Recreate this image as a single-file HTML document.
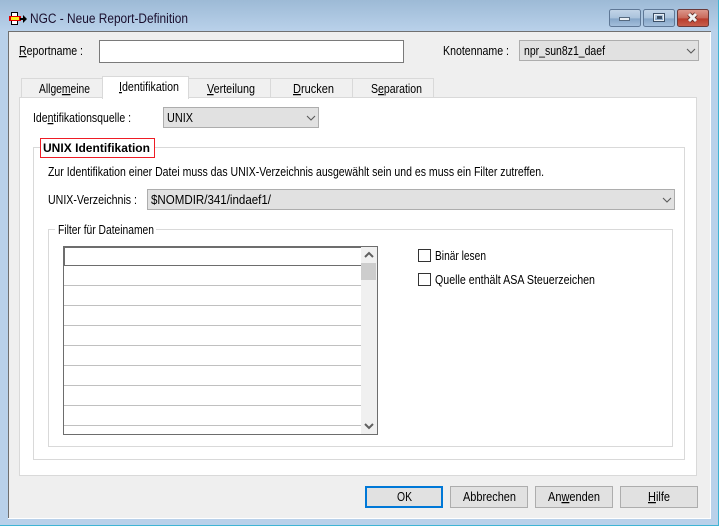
<!DOCTYPE html>
<html><head><meta charset="utf-8"><style>
html,body{margin:0;padding:0;background:#b9d1ea;width:719px;height:526px;overflow:hidden}
svg{display:block}
text{font-family:"Liberation Sans",sans-serif;font-size:12.5px;fill:#000;white-space:pre}
.r{shape-rendering:crispEdges}
</style></head><body>
<svg width="719" height="526" viewBox="0 0 719 526" xmlns="http://www.w3.org/2000/svg">
<defs>
<linearGradient id="tb" x1="0" y1="0" x2="0" y2="1"><stop offset="0" stop-color="#9dbad6"/><stop offset="1" stop-color="#b9d1ea"/></linearGradient>
<linearGradient id="b1" x1="0" y1="0" x2="0" y2="1"><stop offset="0" stop-color="#c3d5e8"/><stop offset=".5" stop-color="#a9c2dc"/><stop offset=".55" stop-color="#86a6c8"/><stop offset="1" stop-color="#a5c0dc"/></linearGradient>
<linearGradient id="b2" x1="0" y1="0" x2="0" y2="1"><stop offset="0" stop-color="#dc9a8e"/><stop offset=".5" stop-color="#c9685a"/><stop offset=".55" stop-color="#b93c2c"/><stop offset="1" stop-color="#c8604e"/></linearGradient>
</defs>
<rect width="719" height="526" fill="#b9d1ea"/>
<rect width="719" height="31" fill="url(#tb)"/>
<rect class="r" y="525" width="719" height="1" fill="#3fb4d4"/>
<rect class="r" x="718" width="1" height="526" fill="#3fb4d4"/>
<rect class="r" x="8" y="31" width="703" height="488" fill="#efefef"/>
<rect class="r" x="8" y="31" width="703" height="1" fill="#707070"/>
<rect class="r" x="8" y="31" width="1" height="487" fill="#707070"/>
<rect class="r" x="8" y="518" width="703" height="1" fill="#fff"/>
<rect class="r" x="710" y="32" width="1" height="487" fill="#fff"/>

<!-- icon -->
<g class="r"><rect x="11" y="12" width="7" height="13" fill="#000"/><rect x="12" y="13" width="5" height="11" fill="#fff"/>
<rect x="9" y="16" width="12" height="5" fill="#e00000"/><rect x="11" y="17" width="8" height="3" fill="#f7ef20"/>
<rect x="20" y="18" width="4" height="2" fill="#000"/></g>
<path d="M23 15 L27 19 L23 23 Z" fill="#000"/>
<text x="30" y="23" textLength="158" lengthAdjust="spacingAndGlyphs" style="font-size:13.5px;fill:#1a0f2e">NGC - Neue Report-Definition</text>

<!-- window buttons -->
<rect x="609.5" y="9.5" width="31" height="17" rx="2" fill="url(#b1)" stroke="#5f7896"/>
<rect x="643.5" y="9.5" width="31" height="17" rx="2" fill="url(#b1)" stroke="#5f7896"/>
<rect x="677.5" y="9.5" width="31" height="17" rx="2" fill="url(#b2)" stroke="#6a3a3a"/>
<rect x="619.5" y="17.5" width="10" height="3" fill="#e8eef4" stroke="#55697f"/>
<rect x="653.5" y="13.5" width="11" height="8" fill="none" stroke="#3c4f66"/><rect x="654.5" y="14.5" width="9" height="6" fill="none" stroke="#e8eef4"/><rect class="r" x="657" y="16" width="5" height="3" fill="#3c4f66"/>
<path d="M689 14 L696 21 M696 14 L689 21" stroke="#5c2a24" stroke-width="4.6"/>
<path d="M689 14 L696 21 M696 14 L689 21" stroke="#f2f2f2" stroke-width="3"/>

<!-- top row -->
<text x="19" y="55" textLength="64" lengthAdjust="spacingAndGlyphs"><tspan text-decoration="underline">R</tspan>eportname :</text>
<rect class="r" x="99.5" y="40.5" width="304" height="22" fill="#fff" stroke="#7a7a7a"/>
<text x="443" y="55" textLength="66" lengthAdjust="spacingAndGlyphs">Knotenname :</text>
<rect class="r" x="519.5" y="40.5" width="179" height="20" fill="#e1e1e1" stroke="#adadad"/>
<text x="524" y="55" textLength="81" lengthAdjust="spacingAndGlyphs">npr_sun8z1_daef</text>
<path d="M687 49 L691 53 L695 49" fill="none" stroke="#5a5a5a" stroke-width="1.1"/>

<!-- tabs -->
<g class="r">
<rect x="21.5" y="78.5" width="81" height="20" fill="#f0f0f0" stroke="#d9d9d9"/>
<rect x="188.5" y="78.5" width="82" height="20" fill="#f0f0f0" stroke="#d9d9d9"/>
<rect x="270.5" y="78.5" width="82" height="20" fill="#f0f0f0" stroke="#d9d9d9"/>
<rect x="352.5" y="78.5" width="81" height="20" fill="#f0f0f0" stroke="#d9d9d9"/>
<rect x="19.5" y="97.5" width="677" height="378" fill="#fff" stroke="#d9d9d9"/>
<rect x="102.5" y="76.5" width="86" height="22" fill="#fff" stroke="#d9d9d9"/>
<rect x="103" y="97" width="85" height="2" fill="#fff"/>
</g>
<text x="39" y="93" textLength="51" lengthAdjust="spacingAndGlyphs">Allge<tspan text-decoration="underline">m</tspan>eine</text>
<text x="119" y="91" textLength="60" lengthAdjust="spacingAndGlyphs"><tspan text-decoration="underline">I</tspan>dentifikation</text>
<text x="207" y="93" textLength="48" lengthAdjust="spacingAndGlyphs"><tspan text-decoration="underline">V</tspan>erteilung</text>
<text x="293" y="93" textLength="41" lengthAdjust="spacingAndGlyphs"><tspan text-decoration="underline">D</tspan>rucken</text>
<text x="371" y="93" textLength="51" lengthAdjust="spacingAndGlyphs">S<tspan text-decoration="underline">e</tspan>paration</text>

<!-- source -->
<text x="33" y="122" textLength="98" lengthAdjust="spacingAndGlyphs">Ide<tspan text-decoration="underline">n</tspan>tifikationsquelle :</text>
<rect class="r" x="163.5" y="107.5" width="155" height="20" fill="#e1e1e1" stroke="#adadad"/>
<text x="167" y="122" textLength="26" lengthAdjust="spacingAndGlyphs">UNIX</text>
<path d="M307 116 L311 120 L315 116" fill="none" stroke="#5a5a5a" stroke-width="1.1"/>

<!-- outer group -->
<g class="r">
<rect x="33.5" y="147.5" width="651" height="312" fill="#fff" stroke="#d9d9d9"/>
<rect x="40.5" y="138.5" width="114" height="19" fill="#fff" stroke="#ee1c25"/>
</g>
<text x="43" y="152" textLength="107" style="font-weight:bold;font-size:12px">UNIX Identifikation</text>
<text x="48" y="176" textLength="496" lengthAdjust="spacingAndGlyphs">Zur Identifikation einer Datei muss das UNIX-Verzeichnis ausgewählt sein und es muss ein Filter zutreffen.</text>
<text x="48" y="204" textLength="89" lengthAdjust="spacingAndGlyphs">UNIX-Verzeichnis :</text>
<rect class="r" x="147.5" y="189.5" width="527" height="20" fill="#e1e1e1" stroke="#adadad"/>
<text x="151" y="204" textLength="120" lengthAdjust="spacingAndGlyphs">$NOMDIR/341/indaef1/</text>
<path d="M663 198 L667 202 L671 198" fill="none" stroke="#5a5a5a" stroke-width="1.1"/>

<!-- inner group -->
<g class="r">
<rect x="48.5" y="229.5" width="624" height="217" fill="#fff" stroke="#d9d9d9"/>
<rect x="55" y="226" width="101" height="7" fill="#fff"/>
</g>
<text x="58" y="234" textLength="96" lengthAdjust="spacingAndGlyphs">Filter für Dateinamen</text>

<!-- list -->
<g class="r">
<rect x="63.5" y="246.5" width="314" height="188" fill="#fff" stroke="#6d6d6d"/>
<rect x="63" y="246" width="298" height="2" fill="#6d6d6d"/>
<rect x="64" y="248" width="1" height="18" fill="#6d6d6d"/>
<rect x="64" y="265" width="297" height="1" fill="#6d6d6d"/>
<rect x="64" y="285" width="297" height="1" fill="#c0c0c0"/>
<rect x="64" y="305" width="297" height="1" fill="#c0c0c0"/>
<rect x="64" y="325" width="297" height="1" fill="#c0c0c0"/>
<rect x="64" y="345" width="297" height="1" fill="#c0c0c0"/>
<rect x="64" y="365" width="297" height="1" fill="#c0c0c0"/>
<rect x="64" y="385" width="297" height="1" fill="#c0c0c0"/>
<rect x="64" y="405" width="297" height="1" fill="#c0c0c0"/>
<rect x="64" y="425" width="297" height="1" fill="#c0c0c0"/>
<rect x="361" y="247" width="16" height="187" fill="#f0f0f0"/>
<rect x="361" y="263" width="15" height="17" fill="#cdcdcd"/>
</g>
<path d="M365 257 L369 253 L373 257" fill="none" stroke="#606060" stroke-width="2"/>
<path d="M365 424 L369 428 L373 424" fill="none" stroke="#606060" stroke-width="2"/>

<!-- checkboxes -->
<g class="r">
<rect x="418.5" y="249.5" width="12" height="12" fill="#fff" stroke="#333"/>
<rect x="418.5" y="273.5" width="12" height="12" fill="#fff" stroke="#333"/>
</g>
<text x="435" y="260" textLength="51" lengthAdjust="spacingAndGlyphs">Binär lesen</text>
<text x="435" y="284" textLength="160" lengthAdjust="spacingAndGlyphs">Quelle enthält ASA Steuerzeichen</text>

<!-- buttons -->
<g class="r">
<rect x="366" y="487" width="76" height="20" fill="#e1e1e1" stroke="#0078d7" stroke-width="2"/>
<rect x="450.5" y="486.5" width="77" height="21" fill="#e1e1e1" stroke="#adadad"/>
<rect x="535.5" y="486.5" width="77" height="21" fill="#e1e1e1" stroke="#adadad"/>
<rect x="620.5" y="486.5" width="77" height="21" fill="#e1e1e1" stroke="#adadad"/>
</g>
<text x="397" y="501" textLength="15" lengthAdjust="spacingAndGlyphs">OK</text>
<text x="463" y="501" textLength="53" lengthAdjust="spacingAndGlyphs">Abbrechen</text>
<text x="548" y="501" textLength="52" lengthAdjust="spacingAndGlyphs">An<tspan text-decoration="underline">w</tspan>enden</text>
<text x="648" y="501" textLength="22" lengthAdjust="spacingAndGlyphs"><tspan text-decoration="underline">H</tspan>ilfe</text>
</svg>
</body></html>
